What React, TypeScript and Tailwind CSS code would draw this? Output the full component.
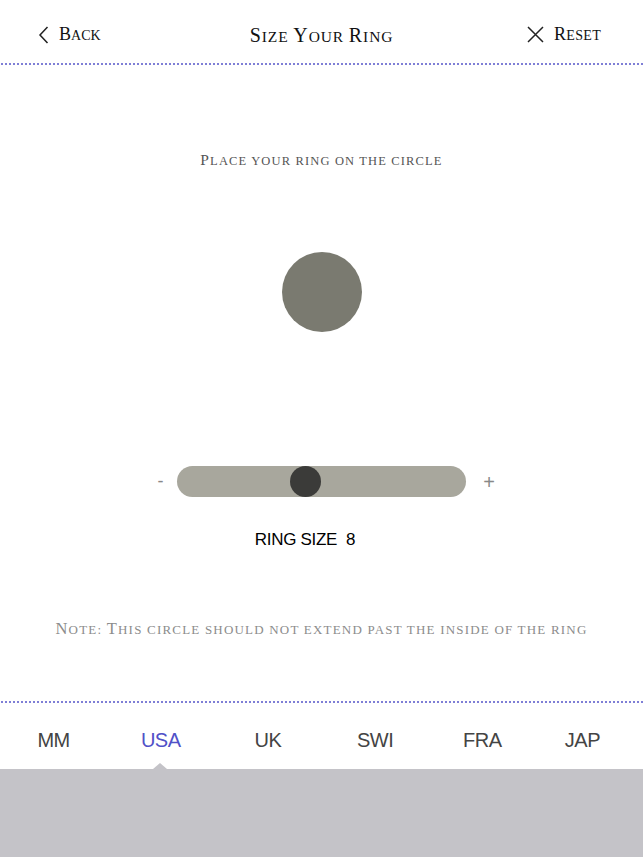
import React from "react";

const serif = { fontFamily: '"Liberation Serif", "DejaVu Serif", serif' };
const sans = { fontFamily: '"Liberation Sans", Arial, sans-serif' };

function SC({ text, big, small, className = "" }: { text: string; big: number; small: number; className?: string }) {
  const parts: { s: string; up: boolean }[] = [];
  for (const ch of text) {
    const up = ch !== ch.toLowerCase();
    const last = parts[parts.length - 1];
    if (last && last.up === up) last.s += ch;
    else parts.push({ s: ch, up });
  }
  return (
    <span className={className} style={serif}>
      {parts.map((p, i) => (
        <span key={i} style={{ fontSize: p.up ? big : small }}>
          {p.s.toUpperCase()}
        </span>
      ))}
    </span>
  );
}

function Dotted() {
  return (
    <div className="h-[2px] w-full bg-[radial-gradient(circle,#7f7fd6_0.9px,transparent_1.1px)] bg-[length:4px_2px] bg-repeat-x" />
  );
}

export default function App() {
  const tabs = ["MM", "USA", "UK", "SWI", "FRA", "JAP"];
  return (
    <div className="w-[643px] h-[857px] bg-white flex flex-col overflow-hidden">
      {/* header */}
      <div className="h-[63px] flex items-center justify-between px-[38px] pt-[6px] text-[#111]">
        <div className="flex items-center gap-[10px] w-[120px]">
          <svg width="11" height="18" viewBox="0 0 11 18" fill="none" stroke="#222" strokeWidth="1.5">
            <path d="M9.5 1 L2 9 L9.5 17" />
          </svg>
          <SC text="Back" big={18} small={14} className="tracking-[0px]" />
        </div>
        <SC text="Size Your Ring" big={20} small={15.5} className="tracking-[0.9px]" />
        <div className="flex items-center justify-end gap-[10px] w-[120px] pr-[4px]">
          <svg width="17" height="17" viewBox="0 0 17 17" fill="none" stroke="#222" strokeWidth="1.5">
            <path d="M1 1 L16 16 M16 1 L1 16" />
          </svg>
          <SC text="Reset" big={18} small={14} className="tracking-[0.3px]" />
        </div>
      </div>
      <Dotted />

      {/* body */}
      <div className="flex flex-col items-center">
        <div className="mt-[84px] text-[#555] leading-[20px]">
          <SC text="Place your ring on the circle" big={15.5} small={12.5} className="tracking-[1.15px]" />
        </div>
        <div className="mt-[81px] w-[80px] h-[80px] rounded-full bg-[#7a7a70]" />
        <div className="mt-[134px] ml-[12px] flex items-center">
          <span className="text-[18px] text-[#888] w-[35px] text-center mr-[-1px]" style={sans}>-</span>
          <div className="w-[289px] h-[31px] rounded-full bg-[#a8a79d] relative">
            <div className="absolute left-[113px] top-0 w-[31px] h-[31px] rounded-full bg-[#3b3b39]" />
          </div>
          <span className="text-[20px] text-[#888] w-[46px] text-center" style={sans}>+</span>
        </div>
        <div className="mt-[30px] text-[17px] text-black tracking-[-0.3px] ml-[-33px]" style={sans}>
          RING SIZE&nbsp;&nbsp;8
        </div>
        <div className="mt-[65px] text-[#8c8c8c] leading-[20px]">
          <SC text="Note: This circle should not extend past the inside of the ring" big={16.5} small={13} className="tracking-[1.2px]" />
        </div>
      </div>

      <div className="mt-auto">
        <Dotted />
        <div className="grid grid-cols-6 h-[66px] items-center pt-[8px]" style={sans}>
          {tabs.map((t) => (
            <div
              key={t}
              className={`text-center text-[20px] tracking-[-0.5px] ${t === "USA" ? "text-[#5151c8]" : "text-[#444]"} ${t === "JAP" ? "pr-[14px]" : ""}`}
            >
              {t}
            </div>
          ))}
        </div>
        <div className="h-[88px] bg-[#c4c3c8] relative">
          <div className="absolute left-[153px] top-[-6px] w-0 h-0 border-l-[7px] border-r-[7px] border-b-[6px] border-l-transparent border-r-transparent border-b-[#c4c3c8]" />
        </div>
      </div>
    </div>
  );
}
